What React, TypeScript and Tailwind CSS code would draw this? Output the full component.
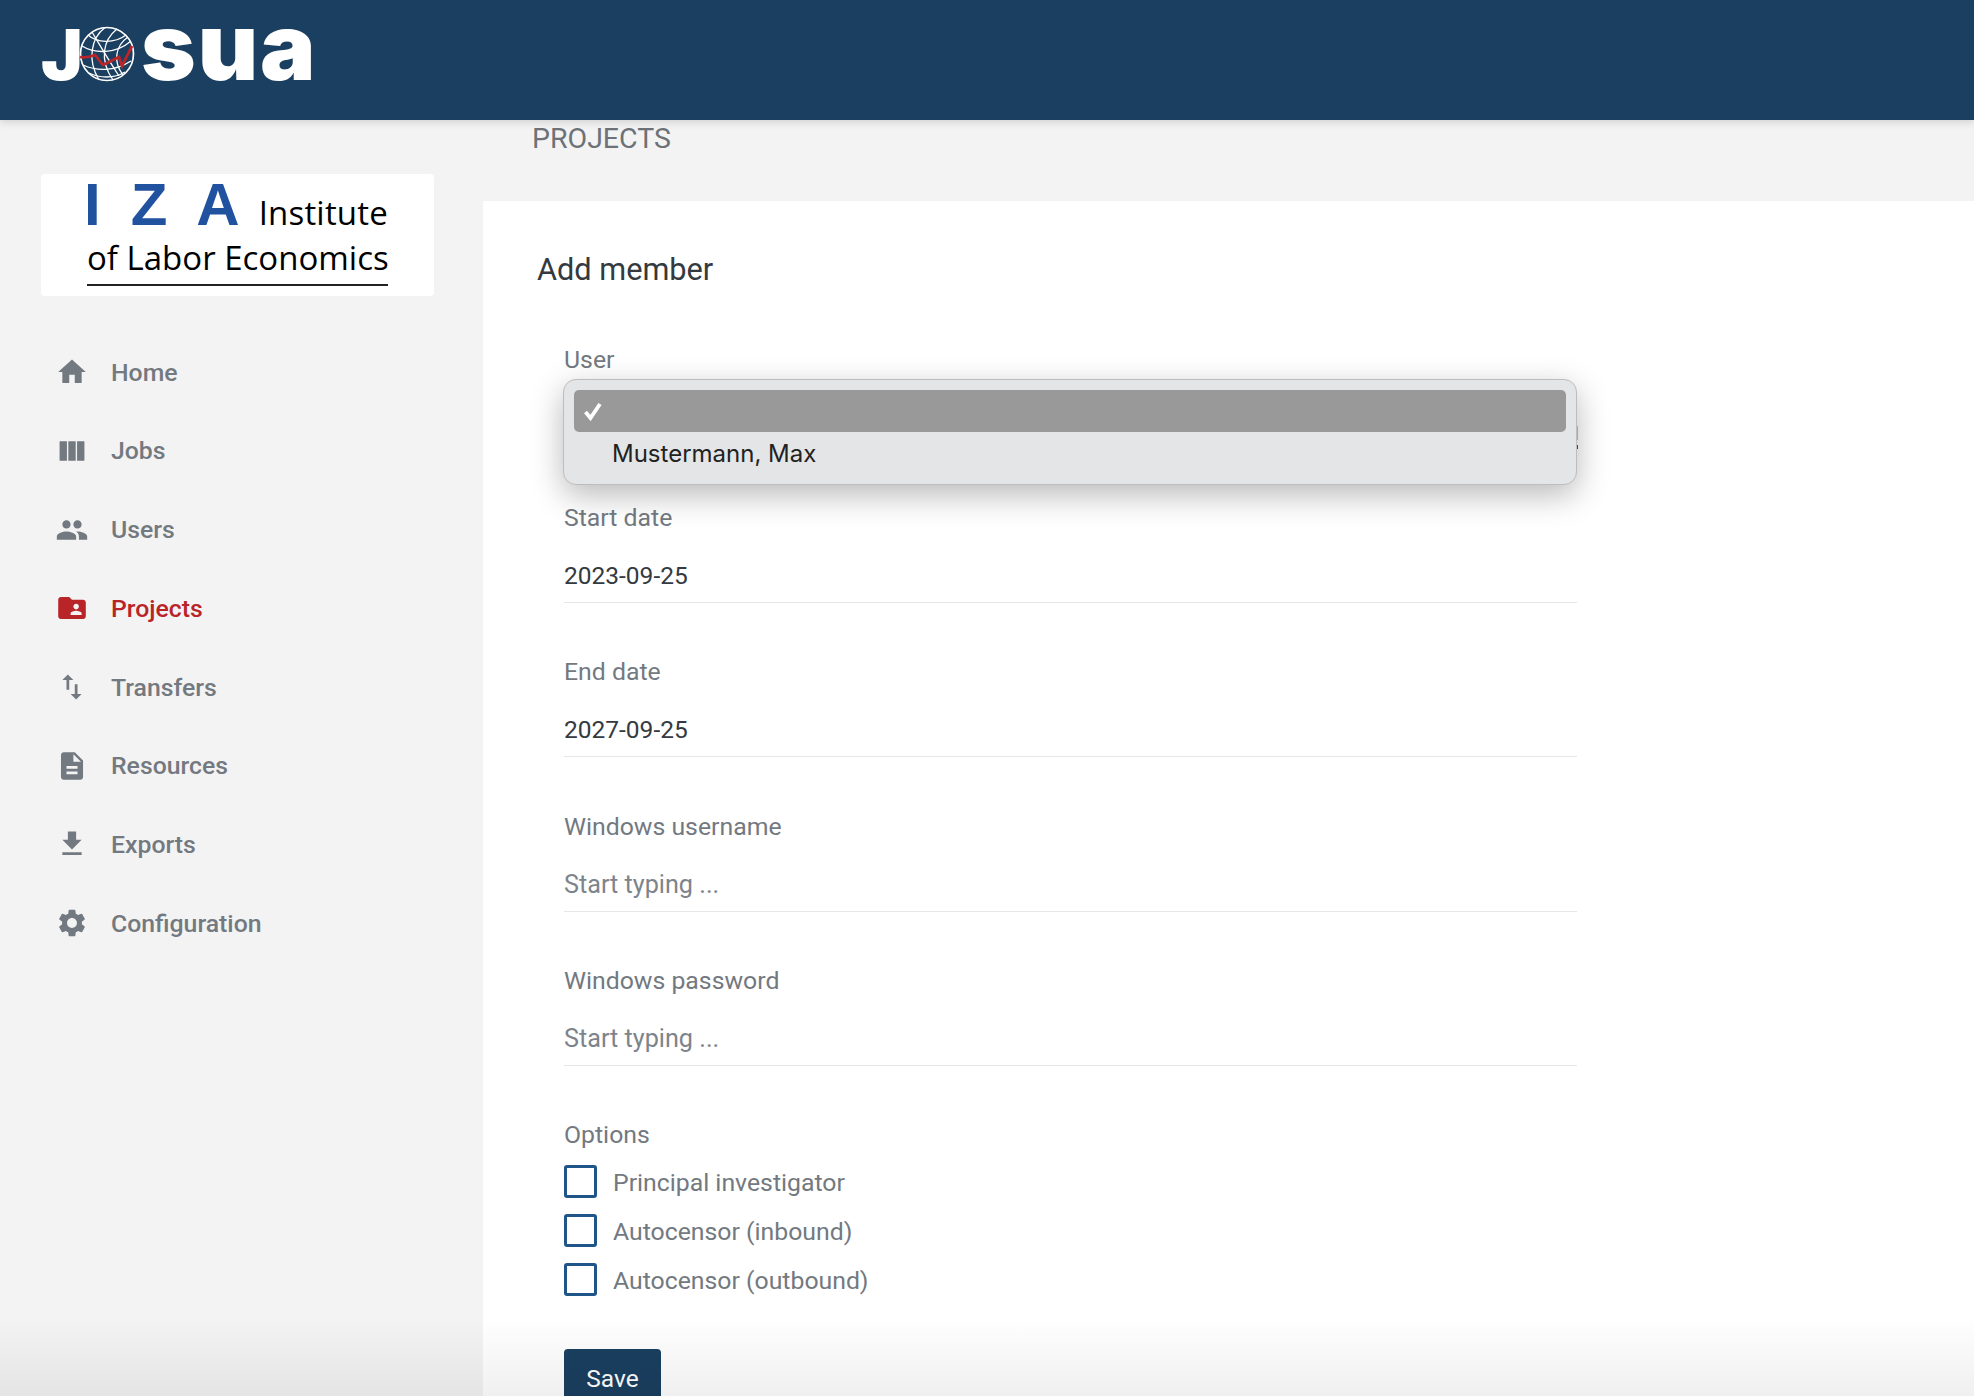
import {
  MdHome,
  MdViewColumn,
  MdPeople,
  MdFolderShared,
  MdImportExport,
  MdDescription,
  MdFileDownload,
  MdSettings,
} from "react-icons/md";

const navItems = [
  { label: "Home", icon: MdHome },
  { label: "Jobs", icon: MdViewColumn },
  { label: "Users", icon: MdPeople },
  { label: "Projects", icon: MdFolderShared, active: true },
  { label: "Transfers", icon: MdImportExport },
  { label: "Resources", icon: MdDescription },
  { label: "Exports", icon: MdFileDownload },
  { label: "Configuration", icon: MdSettings },
];

const Globe = () => (
  <svg viewBox="0 0 56 56" className="w-[56px] h-[56px] shrink-0 translate-y-[2px]" fill="none">
    <g stroke="#ffffff" strokeWidth="1.3">
      <circle cx="28" cy="28" r="26.5" strokeWidth="1.7" />
      <path d="M9 9c9 8 26 9 38 0" />
      <path d="M3 20c13 8 34 8 49-5" />
      <path d="M4 39c13 6 31 7 48-4" />
      <path d="M10 47c10 5 25 6 36-1" />
      <path d="M26 1.5C12 12 8 34 20 54" />
      <path d="M38 3C24 14 20 34 34 54" />
      <path d="M49 11C36 20 34 36 44 49" />
      <path d="M13 6c6 10 14 24 27 44" />
    </g>
    <path
      d="M1 31c5 1 10 0 15-2l8 10 16-8 3 9 10-20"
      stroke="#b92428"
      strokeWidth="2.8"
      strokeLinejoin="miter"
    />
  </svg>
);

const JosuaLogo = () => (
  <div className="flex items-baseline text-white font-['Inter',sans-serif] font-black leading-[60px]">
    <span className="text-[70px] w-[38px]">J</span>
    <Globe />
    <span className="text-[93px] ml-[6px] tracking-[2px]">sua</span>
  </div>
);

const IzaLogo = () => (
  <div className="w-[393px] h-[122px] mb-[37px] bg-white rounded-[4px] pl-[46px] pr-[46px] pt-[6px] font-['Open_Sans',sans-serif] text-black">
    <div className="flex items-end h-[50px]">
      <span className="font-['Liberation_Sans',sans-serif] font-bold text-[#21529f] text-[60px] leading-[50px] -ml-[3px] w-[48px]">
        I
      </span>
      <span className="font-['Liberation_Sans',sans-serif] font-bold text-[#21529f] text-[60px] leading-[50px] w-[67px]">
        Z
      </span>
      <span className="font-['Liberation_Sans',sans-serif] font-bold text-[#21529f] text-[60px] leading-[50px] w-[64px]">
        A
      </span>
      <span className="text-[33px] leading-[35px] tracking-[0.2px]">Institute</span>
    </div>
    <div className="text-[33px] leading-[44px] mt-[5.5px] whitespace-nowrap">of Labor Economics</div>
    <div className="h-[2px] bg-[#222222] mt-[4px]" />
  </div>
);

const Sidebar = () => (
  <aside className="w-[483px] shrink-0 pl-[41px] pt-[54px]">
    <IzaLogo />
    <nav className="flex flex-col">
      {navItems.map((item) => {
        const Icon = item.icon;
        return (
          <a
            key={item.label}
            className={`flex items-center h-[78.7px] gap-[21px] pl-[13px] text-[24.8px] font-medium ${
              item.active ? "text-[#b92428]" : "text-[#737980]"
            }`}
          >
            <Icon className="w-[36px] h-[36px] scale-[0.92]" />
            {item.label}
          </a>
        );
      })}
    </nav>
  </aside>
);

const Field = ({ label, value, placeholder }: { label: string; value?: string; placeholder?: string }) => (
  <div className="h-[154.3px]">
    <div className="pt-[3px] text-[24.8px] leading-[34px] text-[#737980]">{label}</div>
    <div
      className={`mt-[10px] h-[58px] border-b border-[#e5e7e9] pt-[14px] leading-[34px] ${
        value ? "text-[24.5px] text-[#343a40]" : "text-[25.2px] text-[#7d848b]"
      }`}
    >
      {value ?? placeholder}
    </div>
  </div>
);

const options = ["Principal investigator", "Autocensor (inbound)", "Autocensor (outbound)"];

export default function App() {
  return (
    <div className="relative h-[1396px] overflow-hidden bg-[#f3f3f3] font-['Roboto',sans-serif]">
      <header className="relative z-10 h-[120px] bg-[#1a3f60] pl-[41px] pt-[16px] shadow-[0_2px_8px_rgba(0,0,0,0.15)]">
        <JosuaLogo />
      </header>

      <div className="flex">
        <Sidebar />
        <main className="flex-1">
          <div className="h-[81px] pl-[49px] pt-[3px] text-[28.5px] leading-[32px] text-[#6c7278]">PROJECTS</div>
          <section className="bg-white h-[1195px] pl-[54px] pt-[50px]">
            <h2 className="text-[30.7px] leading-[38px] text-[#343a40]">Add member</h2>
            <div className="w-[1013px] ml-[27px] mt-[51px]">
              <div className="relative h-[158px]">
                <div className="pt-[3px] text-[24.8px] leading-[34px] text-[#737980]">User</div>
                {/* open select menu */}
                <div className="absolute top-[39px] -left-px w-[1014px] h-[106px] rounded-[13px] border border-[#bdbdbd] bg-[#e4e5e7] p-[10px] shadow-[0_10px_32px_rgba(0,0,0,0.28)] font-['Inter',sans-serif]">
                  <div className="h-[42px] rounded-[5px] bg-[#999999] flex items-center pl-[9px]">
                    <svg viewBox="0 0 20 20" className="w-[20px] h-[20px]" fill="none">
                      <path d="M2.5 11l5 6L17 3" stroke="#ffffff" strokeWidth="3.8" />
                    </svg>
                  </div>
                  <div className="pl-[38px] text-[24px] leading-[44px] text-[#222222]">Mustermann, Max</div>
                  {/* select underneath shows past the menu edge */}
                  <div className="absolute top-[46px] -right-[2px] w-px h-[14px] bg-[#a8a8a8]" />
                  <div className="absolute top-[65px] -right-[2px] w-px h-[4px] bg-[#1f5588]" />
                </div>
              </div>
              <Field label="Start date" value="2023-09-25" />
              <Field label="End date" value="2027-09-25" />
              <Field label="Windows username" placeholder="Start typing ..." />
              <Field label="Windows password" placeholder="Start typing ..." />
              <div className="pt-[3px] text-[24.8px] leading-[34px] text-[#737980]">Options</div>
              <div className="mt-[13px] flex flex-col gap-[16px]">
                {options.map((option) => (
                  <label key={option} className="flex items-center gap-[16px] h-[33px] text-[24.8px] text-[#737980]">
                    <span className="w-[33px] h-[33px] rounded-[3px] border-[3px] border-[#1f5588] bg-white" />
                    <span className="pt-[2px]">{option}</span>
                  </label>
                ))}
              </div>
              <button className="mt-[53px] w-[97px] h-[60px] rounded-t-[4px] bg-[#1a3f60] text-white text-[24.5px]">
                Save
              </button>
            </div>
          </section>
        </main>
      </div>

      {/* fade at the bottom of the window */}
      <div className="absolute bottom-0 inset-x-0 h-[80px] bg-gradient-to-b from-transparent to-black/[0.06] pointer-events-none" />
    </div>
  );
}
